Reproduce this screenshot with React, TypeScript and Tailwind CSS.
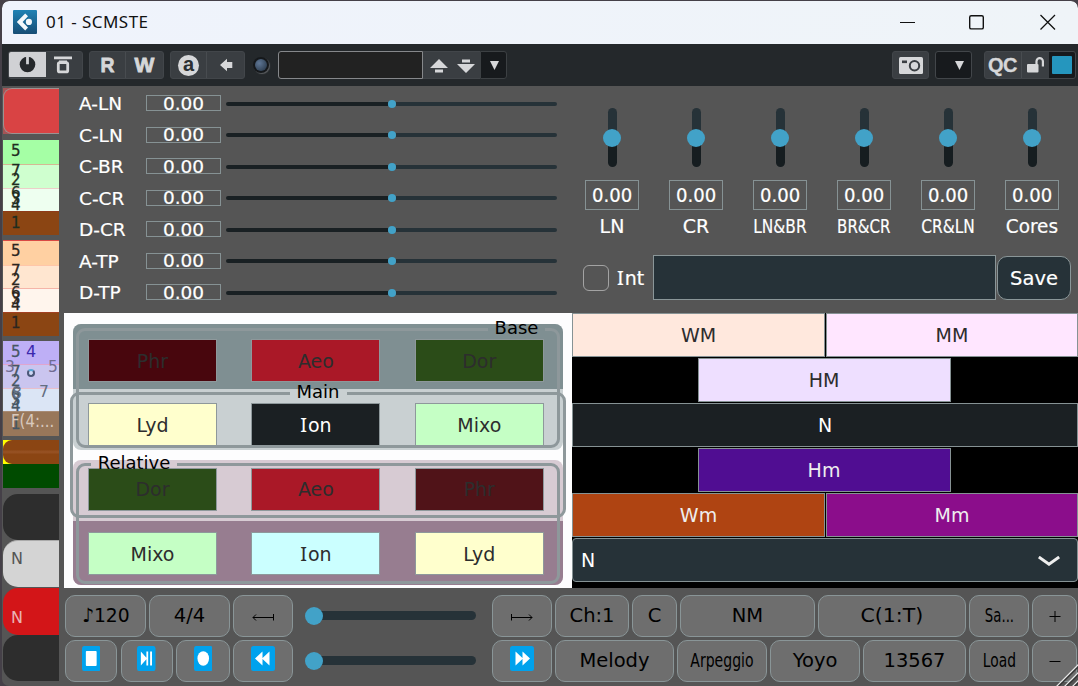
import React from 'react'
import clsx from 'clsx'

const params = ['A-LN', 'C-LN', 'C-BR', 'C-CR', 'D-CR', 'A-TP', 'D-TP']

const cores = [
  { name: 'LN', fit: '' },
  { name: 'CR', fit: '' },
  { name: 'LN&BR', fit: 'scale-x-[0.81]' },
  { name: 'BR&CR', fit: 'scale-x-[0.79]' },
  { name: 'CR&LN', fit: 'scale-x-[0.81]' },
  { name: 'Cores', fit: 'scale-x-[0.97]' }
]

const modes = [
  { name: 'Phr', look: 'bg-[#48060d] text-[#2d2d2d]' },
  { name: 'Aeo', look: 'bg-[#aa1827] text-[#2d2d2d]' },
  { name: 'Dor', look: 'bg-[#2b4c18] text-[#2d2d2d]' },
  { name: 'Lyd', look: 'bg-[#ffffcd] text-[#2d2d2d]' },
  { name: 'Ion', look: 'bg-[#1b2023] text-white' },
  { name: 'Mixo', look: 'bg-[#c5ffc5] text-[#2d2d2d]' },
  { name: 'Dor', look: 'bg-[#2b4c18] text-[#2d2d2d]' },
  { name: 'Aeo', look: 'bg-[#aa1827] text-[#2d2d2d]' },
  { name: 'Phr', look: 'bg-[#501318] text-[#2d2d2d]' },
  { name: 'Mixo', look: 'bg-[#c5ffc5] text-[#2d2d2d]' },
  { name: 'Ion', look: 'bg-[#cbffff] text-[#2d2d2d]' },
  { name: 'Lyd', look: 'bg-[#ffffcd] text-[#2d2d2d]' }
]

const Word = ({ text }: { text: string }): JSX.Element => (
  text.startsWith('I')
    ? <span><span className="mr-[1px] font-['Noto_Sans',sans-serif] text-[1.05em] leading-none">I</span>{text.slice(1)}</span>
    : <span>{text}</span>
)

interface PadProps {
  className: string
  fit?: string
  children: React.ReactNode
}

const Pad = ({ className, fit, children }: PadProps): JSX.Element => (
  <button
    type="button"
    className={clsx('flex h-[42px] shrink-0 items-center justify-center rounded-[10px] border-[1.5px] border-[#899597] bg-[#6e6e6e] pt-px text-[19.5px] whitespace-nowrap text-black', className)}
  >
    <span className={clsx('inline-block', fit)}>{children}</span>
  </button>
)

const Media = ({ wide, children }: { wide?: boolean, children: React.ReactNode }): JSX.Element => (
  <svg
    className="-mt-[6px] block"
    width={wide === true ? 24 : 18.5}
    height={25}
    viewBox="0 0 24 25"
    preserveAspectRatio="none"
  >
    <rect width="24" height="25" rx="2.5" fill="#00a2ed" />
    <g fill="#fff">{children}</g>
  </svg>
)

const HSlider = (): JSX.Element => (
  <div className="ml-[12px] flex h-[42px] w-[171px] shrink-0 items-center">
    <span className="z-10 size-[18px] shrink-0 rounded-full bg-[#42a2c8]" />
    <span className="-ml-[10px] h-[9px] grow rounded-full bg-[#263238]" />
  </div>
)

const TitleBar = (): JSX.Element => (
  <header className="flex h-[43px] shrink-0 items-center rounded-t-[7px] bg-linear-to-r from-[#eff3fc] to-[#eff4f8] pl-[11px]">
    <svg className="-mt-[2px]" width="24" height="24" viewBox="0 0 24 24">
      <defs>
        <linearGradient id="logo" x1="0" y1="0" x2="0" y2="1">
          <stop offset="0" stopColor="#2082b4" />
          <stop offset="1" stopColor="#174d75" />
        </linearGradient>
      </defs>
      <rect width="24" height="24" rx="1" fill="url(#logo)" />
      <path d="M12.2 3.5 15 6.3 9.6 11.9 15 17.5 12.2 20.4 3.8 11.9z" fill="#f4f8fb" />
      <circle cx="15.9" cy="11.9" r="3.1" fill="#f4f8fb" />
    </svg>
    <h1 className="-mt-[2px] ml-[9px] grow font-['Noto_Sans',sans-serif] text-[17px] tracking-[0.45px] text-[#111]">01 - SCMSTE</h1>
    <svg className="-mt-[2px] mr-[22px]" width="156" height="16" viewBox="0 0 156 16" fill="none" stroke="#111">
      <path d="M0 8.5h15" strokeWidth="1.2" />
      <rect x="69.7" y="1.7" width="13.6" height="13.2" rx="1.5" strokeWidth="1.4" />
      <path d="M140.5 1l14.5 14.5M155 1l-14.5 14.5" strokeWidth="1.3" />
    </svg>
  </header>
)

const cell = 'flex h-full items-center justify-center'
const group = 'flex h-[28px] shrink-0 overflow-hidden rounded-[3px] border-[1.5px] border-[#42464a] text-[#d6d7d9]'

const Toolbar = (): JSX.Element => (
  <div className="flex h-[42px] shrink-0 items-center bg-[#24282b] pl-[6px] font-['Liberation_Sans',Arial,sans-serif] font-bold">
    <div className={clsx(group, 'w-[75px] bg-[#3a3e42]')}>
      <div className={clsx(cell, '-m-[1.5px] h-[28px] w-[38px] bg-[#d0d1d4]')}>
        <svg width="18" height="18" viewBox="0 0 18 18">
          <circle cx="9.5" cy="9.5" r="7.8" fill="#25282b" />
          <path d="M8.1 0h2.8v9.3H8.1z" fill="#d0d1d4" />
        </svg>
      </div>
      <div className={clsx(cell, 'grow')}>
        <svg width="20" height="18" viewBox="0 0 20 18" fill="none" stroke="currentColor">
          <path d="M1 1.8h18" strokeWidth="2.8" />
          <path d="M6 5.2h8" strokeWidth="1.6" />
          <rect x="5.3" y="6.6" width="9.4" height="9.3" rx="1.5" strokeWidth="2.8" />
        </svg>
      </div>
    </div>
    <div className={clsx(group, 'ml-[6px] w-[75px] bg-[#3a3e42] text-[21px] [-webkit-text-stroke:0.8px]')}>
      <div className={clsx(cell, 'w-[36px] border-r border-[#484c50]')}><span className="inline-block scale-x-[0.92]">R</span></div>
      <div className={clsx(cell, 'grow')}>W</div>
    </div>
    <div className={clsx(group, 'ml-[6px] w-[75px] bg-[#3a3e42]')}>
      <div className={clsx(cell, 'w-[36px] border-r border-[#484c50]')}>
        <span className="flex size-[21px] items-center justify-center rounded-full bg-[#d6d7d9] pb-[3px] text-[20px] leading-none text-[#2c3033]">a</span>
      </div>
      <div className={clsx(cell, 'grow')}>
        <svg width="14" height="14" viewBox="0 0 14 14" fill="currentColor">
          <path d="M1 7 8 .8V4h5.3v6H8v3.2z" />
        </svg>
      </div>
    </div>
    <span className="ml-[8px] flex size-[16px] items-center justify-center rounded-full bg-[#15181b] shadow-[1px_1px_1px_#5b5d60]">
      <span className="size-[12px] rounded-full bg-radial-[at_35%_35%] from-[#5f7796] to-[#22303f]" />
    </span>
    <div className="ml-[9px] flex h-[28px] w-[229px]">
      <input className="h-full w-[145px] rounded-l-[3px] border-[1.5px] border-[#86888b] bg-[#222]" />
      <div className="flex grow items-center gap-[9px] border-y-[1.5px] border-[#42464a] bg-[#3a3e42] pt-[2px] pl-[7px] text-[#d6d7d9]">
        <svg width="18" height="14" viewBox="0 0 18 14" fill="currentColor">
          <path d="M0 9 9 0l9 9zM5 10.5h8v3H5z" />
        </svg>
        <svg width="18" height="14" viewBox="0 0 18 14" fill="currentColor">
          <path d="M0 5h18l-9 9zM5 .5h8v3H5z" />
        </svg>
      </div>
      <div className="flex w-[27px] items-center justify-center rounded-r-[3px] border-[1.5px] border-[#3c4043] bg-[#171a1d] pl-[2px]">
        <svg width="9" height="9" viewBox="0 0 9 9" fill="#d6d7d9"><path d="M0 0h9L4.500 9z" /></svg>
      </div>
    </div>
    <div className={clsx(group, 'ml-auto w-[37px] items-center justify-center bg-[#3a3e42]')}>
      <svg width="24" height="17" viewBox="0 0 24 17">
        <rect width="24" height="17" rx="1.5" fill="#d6d7d9" />
        <rect x="3" y="3.5" width="5" height="2.6" fill="#3a3e42" />
        <circle cx="15.5" cy="8.7" r="4.7" fill="none" stroke="#3a3e42" strokeWidth="2" />
      </svg>
    </div>
    <div className={clsx(group, 'ml-[6px] w-[37px] items-center bg-[#171a1d] pl-[19px]')}>
      <svg width="9" height="9" viewBox="0 0 9 9" fill="currentColor"><path d="M0 0h9L4.500 9z" /></svg>
    </div>
    <div className={clsx(group, 'mr-[2px] ml-[12px] w-[92px] bg-[#3a3e42]')}>
      <div className={clsx(cell, 'w-[37px] border-r border-[#484c50] text-[20px] tracking-[-0.5px]')}>
        <span className="-ml-px inline-block [-webkit-text-stroke:0.3px]">QC</span>
      </div>
      <div className={clsx(cell, 'w-[27px]')}>
        <svg width="18" height="16" viewBox="0 0 18 16">
          <rect x="0" y="7" width="11.5" height="8.5" rx="1" fill="currentColor" />
          <path d="M9.5 7V4.3a3.2 3.2 0 0 1 6.4 0V9.5" fill="none" stroke="currentColor" strokeWidth="2.2" />
        </svg>
      </div>
      <div className={clsx(cell, 'grow bg-[#171a1d]')}>
        <span className="h-[18px] w-[20px] rounded-[1px] bg-[#2596be]" />
      </div>
    </div>
  </div>
)

// scale degrees share one narrow column and run into each other
const degrees = [
  { n: '5', at: 'top-[1px]' },
  { n: '7', at: 'top-[21px]' },
  { n: '2', at: 'top-[30px]' },
  { n: '6', at: 'top-[43px]' },
  { n: '3', at: 'top-[49px]' },
  { n: '4', at: 'top-[55px]' },
  { n: '1', at: 'top-[73px]' }
]

interface ScaleProps {
  className: string
  bands: string[]
  children?: React.ReactNode
}

const ScaleStack = ({ className, bands, children }: ScaleProps): JSX.Element => (
  <div className={clsx('relative shrink-0 overflow-hidden', className)}>
    {bands.map((band, i) => <div key={i} className={clsx('border-t', band)} />)}
    {degrees.map(({ n, at }) => (
      <span key={n} className={clsx('absolute left-[8px] text-[15px] leading-[20px] [-webkit-text-stroke:0.3px]', at)}>{n}</span>
    ))}
    {children}
  </div>
)

const Sidebar = (): JSX.Element => (
  <aside className="flex w-[56px] shrink-0 flex-col overflow-hidden">
    <div className="mt-[2px] h-[46px] shrink-0 bg-[#a55456]">
      <div className="h-full rounded-l-[9px] border-y-[1.5px] border-l-[1.5px] border-[#9c9292] bg-[#d94344]" />
    </div>
    <ScaleStack
      className="mt-[6px] h-[95px] text-[#1f2d1f]"
      bands={[
        'h-[24px] border-[#a5ffa5] bg-[#a5ffa5]',
        'h-[24px] border-[#d5b894] bg-[#cfffcf]',
        'h-[23px] border-[#eccfc9] bg-[#eefff0]',
        'h-[24px] border-[#8f3b1a] bg-[#8b4513]'
      ]}
    />
    <ScaleStack
      className="mt-[5px] h-[96px] text-[#2c2620]"
      bands={[
        'h-[25px] border-[#d94a44] bg-[#ffd0a2]',
        'h-[23px] border-[#ffc6a8] bg-[#ffe6d0]',
        'h-[24px] border-[#f5b5a8] bg-[#fff5ed]',
        'h-[24px] border-[#a34022] bg-[#8b4513]'
      ]}
    />
    <ScaleStack
      className="mt-[5px] h-[95px] text-[#465664]"
      bands={[
        'h-[23px] border-[#beaff6] bg-[#beaff6]',
        'h-[24px] border-[#e0a5cf] bg-[#cac5ef]',
        'h-[23px] border-[#e8bfcb] bg-[#dbe5f5]',
        'h-[25px] border-[#a78b75] bg-[#98775a]'
      ]}
    >
      <span className="absolute top-[1px] left-[23px] text-[16px] leading-[20px] text-[#3b28ae]">4</span>
      <span className="absolute top-[16px] left-[2px] text-[15.5px] leading-[20px] text-[#706c91]">3</span>
      <span className="absolute top-[16px] left-[45px] text-[15.5px] leading-[20px] text-[#706c91]">5</span>
      <span className="absolute top-[41px] left-[36px] text-[15.5px] leading-[20px] text-[#646e80]">7</span>
      <span className="absolute top-[42px] left-[9px] text-[15.5px] leading-[20px] text-[#646e80]">8</span>
      <span className="absolute top-[28px] left-[24px] size-[8px] rounded-full border-2 border-[#4b5778] border-t-[#5aa9d8] bg-[#cfd8f5]" />
      <span className="absolute top-[70px] left-[8px] inline-block origin-left scale-x-[0.83] text-[18px] leading-[20px] text-[#d8c9bd]">F(4:...</span>
    </ScaleStack>
    <div className="mt-[4px] h-[24px] shrink-0 bg-[#ffff00]">
      <div className="h-full rounded-l-[9px] bg-linear-to-b from-[#8b4513] from-40% via-[#985325] via-50% to-[#8b4513] to-60%" />
    </div>
    <div className="h-[24px] shrink-0 bg-[#004b00]" />
    <div className="mt-[6px] h-[46px] shrink-0 rounded-l-[15px] bg-[#2d2d2d]" />
    <div className="h-[47px] shrink-0 rounded-l-[15px] border-t border-[#aaa] bg-[#d4d4d4] pt-[8px] pl-[8px] text-[16px] leading-[20px] text-[#555]">N</div>
    <div className="mt-[1px] h-[47px] shrink-0 rounded-l-[15px] bg-[#d31518] pt-[20px] pl-[8px] text-[16px] leading-[20px] text-[#eab4b5]">N</div>
    <div className="h-[46px] shrink-0 rounded-l-[15px] bg-[#2d2d2d]" />
  </aside>
)

const ParamRows = (): JSX.Element => (
  <div className="flex w-[511px] shrink-0 flex-col pt-[1.5px] pl-[20px] text-white">
    {params.map((name) => (
      <div key={name} className="flex h-[31.5px] items-center text-[18.5px]">
        <span className="w-[67px] shrink-0 pt-[2px] [-webkit-text-stroke:0.2px]">{name}</span>
        <span className="flex h-[16px] w-[75px] shrink-0 items-center justify-center border-[1.5px] border-[#869294] pt-px text-[18.5px] leading-none [-webkit-text-stroke:0.2px]">0.00</span>
        <div className="ml-[5px] flex shrink-0 items-center pt-px">
          <span className="h-[4px] w-[162px] rounded-l-full bg-[#192023]" />
          <span className="size-[8px] rounded-full bg-[#42a2c8]" />
          <span className="h-[4px] w-[161px] rounded-r-full bg-[#263238]" />
        </div>
      </div>
    ))}
  </div>
)

const CorePanel = (): JSX.Element => (
  <div className="flex grow flex-col text-white">
    <div className="flex pt-[22px]">
      {cores.map(({ name, fit }) => (
        <div key={name} className="flex w-[84px] shrink-0 flex-col items-center">
          <div className="flex h-[59px] w-[18px] flex-col items-center">
            <span className="h-[24px] w-[9px] rounded-t-full bg-[#263238]" />
            <span className="z-10 -my-[3px] size-[18px] shrink-0 rounded-full bg-[#42a2c8]" />
            <span className="w-[9px] grow rounded-b-full bg-[#161d20]" />
          </div>
          <span className="mt-[13px] flex h-[30px] w-[54px] items-center justify-center border-[1.5px] border-[#869294] pt-px text-[19px]">
            <span className="inline-block scale-x-[0.95] [-webkit-text-stroke:0.2px]">0.00</span>
          </span>
          <span className={clsx('mt-[4px] inline-block text-[19px] leading-[24px] [-webkit-text-stroke:0.2px]', fit)}>{name}</span>
        </div>
      ))}
    </div>
    <div className="mt-[17px] flex h-[45px] items-center pl-[13px] text-[19px]">
      <span className="size-[26px] rounded-[6px] border-[1.5px] border-[#a3a3a3]" />
      <span className="ml-[8px] w-[36px] pt-px [-webkit-text-stroke:0.2px]"><Word text="Int" /></span>
      <input className="h-[45px] w-[343px] border-[1.5px] border-[#8a9698] bg-[#263238]" />
      <button type="button" className="ml-[1px] h-[44px] w-[74px] rounded-[10px] border-[1.5px] border-[#8a9698] bg-[#263238] pt-[2px] text-[19.5px] [-webkit-text-stroke:0.2px]">Save</button>
    </div>
  </div>
)

const frame = 'pointer-events-none absolute rounded-[9px] border-[3px] border-[#8e989b]'
const legend = 'text-[18px] leading-[20px] text-black'

// the legend's own text-align would move the gap, so the word is centred one level down
const Caption = ({ children }: { children: string }): JSX.Element => (
  <span className="relative -top-[1px] block text-center">{children}</span>
)

const ModePanel = (): JSX.Element => (
  <section className="relative h-[275px] w-[508px] shrink-0 bg-[#fdfdfe] pt-[26px] pl-[24px]">
    <div className="absolute top-[11px] left-[9px] h-[126px] w-[490px] overflow-hidden rounded-[8px] bg-[#c9d0d2]">
      <div className="h-[65px] bg-[#7f8f92]" />
    </div>
    <div className="absolute top-[147px] left-[9px] h-[125px] w-[490px] overflow-hidden rounded-[8px] bg-[#d7cbd3]">
      <div className="mt-[61px] h-[64px] bg-[#977d90]" />
    </div>
    <div className="relative grid grid-cols-[129px_129px_129px] gap-x-[34.4px] gap-y-[21.3px]">
      {modes.map(({ name, look }, i) => (
        <button key={i} type="button" className={clsx('h-[43px] border-[1.5px] border-[#8e989b] pt-px text-[19px]', look)}>
          <Word text={name} />
        </button>
      ))}
    </div>
    <fieldset className={clsx(frame, 'top-[6px] left-[12px] h-[129px] w-[484px]')}>
      <legend className={clsx(legend, 'mr-[12px] ml-auto w-[57px]')}><Caption>Base</Caption></legend>
    </fieldset>
    <fieldset className={clsx(frame, 'top-[70px] left-[6px] h-[135px] w-[496px]')}>
      <legend className={clsx(legend, 'mx-auto w-[57px]')}><Caption>Main</Caption></legend>
    </fieldset>
    <fieldset className={clsx(frame, 'top-[141px] left-[12px] h-[130px] w-[484px]')}>
      <legend className={clsx(legend, 'mr-auto ml-[12px] w-[86px]')}><Caption>Relative</Caption></legend>
    </fieldset>
  </section>
)

const tile = 'h-[44px] border-[1.5px] border-[#869294] pt-px text-[19px]'

const FamilyPanel = (): JSX.Element => (
  <section className="grid h-[275px] grow grid-cols-4 content-start gap-y-px bg-black">
    <button type="button" className={clsx(tile, 'col-span-2 bg-[#ffe8dd] text-[#2d2d2d]')}>WM</button>
    <button type="button" className={clsx(tile, 'col-span-2 ml-px bg-[#ffe6ff] text-[#2d2d2d]')}>MM</button>
    <button type="button" className={clsx(tile, 'col-span-2 col-start-2 -ml-px mr-px bg-[#eedfff] text-[#2d2d2d]')}>HM</button>
    <button type="button" className={clsx(tile, 'col-span-4 bg-[#1b2023] text-white')}>N</button>
    <button type="button" className={clsx(tile, 'col-span-2 col-start-2 -ml-px mr-px bg-[#500d92] text-[#eee]')}>Hm</button>
    <button type="button" className={clsx(tile, 'col-span-2 col-start-1 bg-[#af4412] text-[#eee]')}>Wm</button>
    <button type="button" className={clsx(tile, 'col-span-2 ml-px bg-[#8b0d8b] text-[#eee]')}>Mm</button>
    <button type="button" className={clsx(tile, 'col-span-4 flex items-center justify-between rounded-[4px] bg-[#263238] pr-[17px] pl-[8px] text-white')}>
      N
      <svg width="22" height="10" viewBox="0 0 22 10" fill="none" stroke="#eee" strokeWidth="3">
        <path d="M.8 1 11 8.2 21.2 1" />
      </svg>
    </button>
  </section>
)

const Transport = (): JSX.Element => (
  <footer className="relative flex grow flex-col gap-[3px] overflow-hidden pt-[6.5px] pl-[6px]">
    <div className="flex">
      <Pad className="w-[81px]" fit="scale-x-[0.96]">♪120</Pad>
      <Pad className="ml-[3px] w-[81px]">4/4</Pad>
      <Pad className="ml-[3px] w-[60px]">
        <svg className="mt-[2px]" width="22" height="8" viewBox="0 0 22 8" fill="none" stroke="#000"><path d="M4 1.500 1 4.500l3 3M1 4.500h20.500M21.500 1v6.500" /></svg>
      </Pad>
      <HSlider />
      <Pad className="ml-[16px] w-[60px]">
        <svg className="mt-[2px]" width="22" height="8" viewBox="0 0 22 8" fill="none" stroke="#000"><path d="M18 1.500l3 3-3 3M21 4.500H.5M.5 1v6.500" /></svg>
      </Pad>
      <Pad className="ml-[3px] w-[74px]">Ch:1</Pad>
      <Pad className="ml-[3px] w-[45px]">C</Pad>
      <Pad className="ml-[3px] w-[135px]">NM</Pad>
      <Pad className="ml-[3px] w-[148px]" fit="scale-x-[1.05]">C(1:T)</Pad>
      <Pad className="ml-[3px] w-[60px]" fit="scale-x-[0.68]">Sa...</Pad>
      <Pad className="ml-[3px] w-[45px]">
        <svg width="12" height="12" viewBox="0 0 12 12" stroke="#000"><path d="M.5 6.500h11M6 1v11" /></svg>
      </Pad>
    </div>
    <div className="flex">
      <Pad className="w-[52px]"><Media><rect x="5" y="5" width="14" height="15" rx="1" /></Media></Pad>
      <Pad className="ml-[3.5px] w-[52px]">
        <Media><path d="M5 5.500 13 12.500 5 19.500zM12.2 5.500h2.300v14h-2.300zM17 5.500h2.500v14H17z" /></Media>
      </Pad>
      <Pad className="ml-[3.5px] w-[54px]"><Media><ellipse cx="12" cy="12.5" rx="7.5" ry="7.3" /></Media></Pad>
      <Pad className="ml-[3px] w-[60px]">
        <Media wide><path d="M4 12.500 11.500 5.500v14zM11 12.500 18.500 5.500v14z" /></Media>
      </Pad>
      <HSlider />
      <Pad className="ml-[16px] w-[60px]">
        <Media wide><path d="M20 12.500 12.500 5.500v14zM13 12.500 5.500 5.500v14z" /></Media>
      </Pad>
      <Pad className="ml-[3px] w-[119px]">Melody</Pad>
      <Pad className="ml-[3px] w-[90px]" fit="scale-x-[0.72]">Arpeggio</Pad>
      <Pad className="ml-[3px] w-[90px]">Yoyo</Pad>
      <Pad className="ml-[3px] w-[103px]">13567</Pad>
      <Pad className="ml-[3px] w-[60px]" fit="scale-x-[0.71]">Load</Pad>
      <Pad className="ml-[3px] w-[45px]">
        <svg width="12" height="12" viewBox="0 0 12 12" stroke="#000"><path d="M.5 6.500h11" /></svg>
      </Pad>
    </div>
    <svg className="absolute right-0 bottom-0" width="24" height="24" viewBox="0 0 24 24" strokeWidth="1.3">
      <path d="M2 25 25 2M10 25 25 10M18 25l7-7" stroke="#e6e6e6" />
      <path d="M4 25 25 4M12 25l13-13M20 25l5-5" stroke="#333" />
    </svg>
  </footer>
)

const App = (): JSX.Element => (
  <main className="h-[686px] w-[1078px] overflow-hidden bg-[#454048] pt-px pl-[2px] font-['DejaVu_Sans',Verdana,sans-serif]">
    <div className="flex h-[685px] flex-col overflow-hidden rounded-t-[7px] rounded-bl-[7px] bg-[#555]">
      <TitleBar />
      <Toolbar />
      <div className="flex min-h-0 grow pl-px">
        <Sidebar />
        <div className="flex min-w-0 grow flex-col">
          <div className="flex h-[227px] shrink-0">
            <ParamRows />
            <CorePanel />
          </div>
          <div className="flex pl-[5px]">
            <ModePanel />
            <FamilyPanel />
          </div>
          <Transport />
        </div>
      </div>
    </div>
  </main>
)

export default App
